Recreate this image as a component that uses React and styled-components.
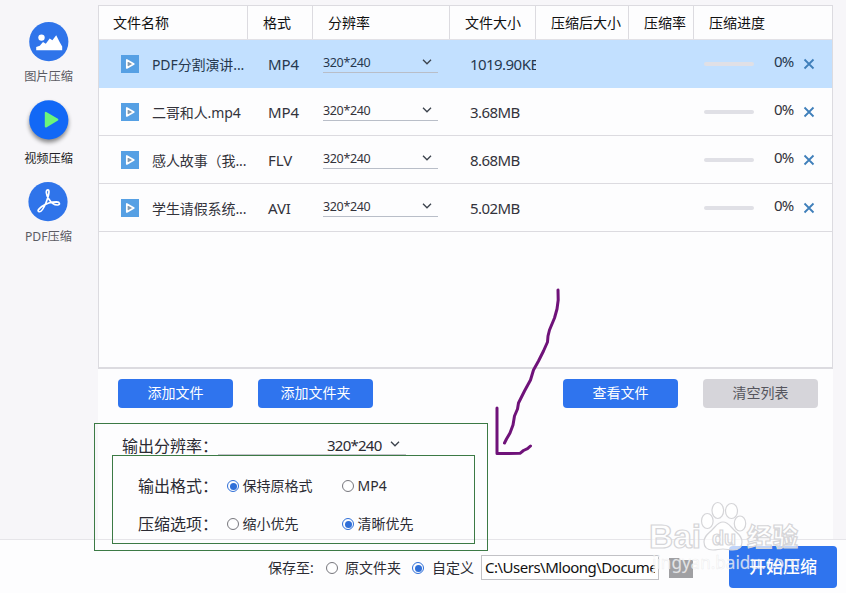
import { useState } from "react";
import styled, { createGlobalStyle } from "styled-components";

const GlobalStyle = createGlobalStyle`
  body {
    margin: 0;
    overflow: hidden;
    background: #fdfdfe;
  }
  * {
    box-sizing: border-box;
  }
`;

const Window = styled.div`
  position: relative;
  width: 846px;
  height: 593px;
  display: flex;
  flex-direction: column;
  background: #fdfdfe;
  color: #2b2b33;
  font-family: "Noto Sans", "Noto Sans CJK SC", sans-serif;
  font-size: 14px;
  line-height: 20px;
  white-space: nowrap;
`;

const Main = styled.div`
  display: flex;
  height: 539px;
  background: #f7f6f9;
`;

const Sidebar = styled.div`
  width: 98px;
  padding: 22px 1px 0 0;
`;

const SideItem = styled.div`
  display: flex;
  flex-direction: column;
  align-items: center;
  height: ${(props) => (props.$active ? "82px" : "78px")};
  color: ${(props) => (props.$active ? "#1e1e26" : "#5b5b63")};
  font-size: 12.2px;
`;

const SideIcon = styled.svg`
  width: 40px;
  height: 40px;
  flex: none;
  overflow: visible;
  filter: ${(props) =>
    props.$active ? "drop-shadow(0 3px 2px rgba(0, 0, 0, 0.45))" : "none"};
`;

const SideLabel = styled.div`
  margin-top: ${(props) => (props.$active ? "9px" : "5px")};
`;

const Content = styled.div`
  width: 735px;
  background: #fdfdfe;
`;

const TableTop = styled.div`
  height: 5px;
  background: #f7f6f9;
`;

const Table = styled.div`
  height: 364px;
  border: 1px solid #dcdbe0;
  border-bottom-width: 2px;
`;

const Columns = styled.div`
  display: grid;
  grid-template-columns: 149px 65px 137px 86px 93px 65px 1fr;
`;

const Head = styled(Columns)`
  height: 34px;
  border-bottom: 1px solid #e2e1e6;
  color: #111;
`;

const HeadCell = styled.div`
  padding: 7px 0 0 ${(props) => props.$pad || 15}px;
  border-right: 1px solid #dcdbe0;
  &:last-child {
    border-right: 0;
  }
`;

const Row = styled(Columns)`
  height: 48px;
  border-bottom: 1px solid ${(props) => (props.$selected ? "#c2e0ff" : "#dcdbe0")};
  background: ${(props) => (props.$selected ? "#c2e0ff" : "transparent")};
  color: ${(props) => (props.$selected ? "#26384e" : "#33333b")};
`;

const Cell = styled.div`
  display: flex;
  align-items: center;
  padding: 2px 0 0 ${(props) => props.$pad || 0}px;
  overflow: ${(props) => (props.$clip ? "hidden" : "visible")};
`;

const NameCell = styled(Cell)`
  letter-spacing: -0.1px;
`;

const ValueCell = styled(Cell)`
  padding-top: 0;
  font-size: 15px;
  letter-spacing: ${(props) => props.$spacing || -0.55}px;
`;

const FileIcon = styled.svg`
  width: 18px;
  height: 18px;
  margin: -1px 13px 0 0;
  flex: none;
`;

const SizeSelect = styled.div`
  width: 115px;
  height: 20px;
  margin: -3px 0 0 10px;
  padding: 0 6px 0 0;
  display: flex;
  align-items: center;
  justify-content: space-between;
  border-bottom: 1px solid #b9bec8;
  font-size: 12.5px;
  letter-spacing: -0.35px;
  svg {
    margin-top: -2px;
  }
`;

const ProgressCell = styled.div`
  display: flex;
  align-items: center;
  padding-left: 10px;
`;

const Track = styled.div`
  width: 50px;
  height: 4px;
  border-radius: 2px;
  background: #e0e0e6;
`;

const Percent = styled.div`
  width: 21px;
  margin: -6px 8px 0 20px;
  font-size: 15px;
  letter-spacing: -0.9px;
`;

const Actions = styled.div`
  display: flex;
  gap: 25px;
  padding: 10px 0 0 20px;
`;

const Button = styled.button`
  width: 115px;
  height: 29px;
  margin: 0 0 0 ${(props) => props.$push || 0}px;
  padding: 0 0 1px;
  border: 0;
  border-radius: 4px;
  background: ${(props) => (props.$muted ? "#d6d5da" : "#2f74ee")};
  color: ${(props) => (props.$muted ? "#55555d" : "#fff")};
  font: inherit;
`;

const Resolution = styled.div`
  display: flex;
  height: 27px;
  margin: 20px 0 0 24px;
  font-size: 16px;
`;

const ResolutionLabel = styled.div`
  width: 96px;
  padding-top: 8px;
`;

const ResolutionSelect = styled.div`
  display: flex;
  align-items: center;
  gap: 8px;
  width: 188px;
  padding: 8px 0 0 109px;
  border-bottom: 1px solid #c3c3ca;
  font-size: 15px;
  letter-spacing: -0.75px;
  svg {
    margin-top: -3px;
  }
`;

const Options = styled.div`
  padding: 12px 0 0 40px;
`;

const OptionRow = styled.div`
  display: grid;
  grid-template-columns: 88.5px 115px 115px;
  align-items: center;
  height: 38px;
`;

const OptionLabel = styled.div`
  font-size: 16px;
`;

const RadioLabel = styled.div`
  display: flex;
  align-items: center;
  gap: ${(props) => props.$gap || 4}px;
`;

const Radio = styled.div`
  width: 12px;
  height: 12px;
  flex: none;
  border: 1px solid ${(props) => (props.$checked ? "#2f6fd8" : "#77777d")};
  border-radius: 50%;
  padding: 1.5px;
  background: ${(props) => (props.$checked ? "#2f6fd8" : "#fff")} content-box;
`;

const Footer = styled.div`
  display: flex;
  align-items: center;
  height: 54px;
  padding: 2px 0 0 268px;
  border-top: 1px solid #e6e5e9;
`;

const SaveLabel = styled.div`
  width: 58px;
`;

const SaveTargets = styled.div`
  display: flex;
  gap: 11px;
`;

const PathBox = styled.div`
  width: 178px;
  height: 25px;
  margin-left: 7px;
  padding: 1px 3px;
  border: 1px solid #c2c2c6;
  background: #fff;
  color: #111;
`;

const PathText = styled.div`
  overflow: hidden;
  font-size: 15px;
  letter-spacing: -0.5px;
`;

const Folder = styled.svg`
  width: 24px;
  height: 20px;
  margin: 0 36px 0 10px;
`;

const StartButton = styled(Button)`
  width: 108px;
  height: 42px;
  margin-top: -2px;
  padding-bottom: 0;
  font-size: 17px;
  font-weight: 500;
`;

const Outline = styled.div`
  position: absolute;
  left: ${(props) => props.$x}px;
  top: ${(props) => props.$y}px;
  width: ${(props) => props.$w}px;
  height: ${(props) => props.$h}px;
  border: 1px solid #3c7a45;
  pointer-events: none;
`;

const Overlay = styled.svg`
  position: absolute;
  left: 0;
  top: 0;
  width: 846px;
  height: 593px;
  pointer-events: none;
`;

const files = [
  { name: "PDF分割演讲...", format: "MP4", size: "1019.90KB" },
  { name: "二哥和人.mp4", format: "MP4", size: "3.68MB" },
  { name: "感人故事（我...", format: "FLV", size: "8.68MB" },
  { name: "学生请假系统...", format: "AVI", size: "5.02MB" },
];

const Chevron = () => (
  <svg width="10" height="6" viewBox="0 0 10 6">
    <path d="M1 .8 5 4.8 9 .8" fill="none" stroke="#3b424c" strokeWidth="1.3" />
  </svg>
);

const ImageIcon = () => (
  <SideIcon viewBox="0 0 40 40">
    <circle cx="19.8" cy="19.7" r="19.6" fill="#2f74ea" />
    <circle cx="12.5" cy="15.6" r="3.2" fill="#fff" />
    <path
      d="M7.200 28.300v-3.400l3.600-1.200 3.200-3.600 2.800 1.600 3.900-5.200 2.700 1.800 3.800-5 3.400 6.700 2.600 4.400v3.900z"
      fill="#fff"
    />
  </SideIcon>
);

const VideoIcon = () => (
  <SideIcon viewBox="0 0 40 40" $active>
    <circle cx="19.8" cy="19.9" r="19.6" fill="#1268f6" />
    <path
      d="M16.800 12.800v13.800l11.600-6.900z"
      fill="#6cf57a"
      stroke="#6cf57a"
      strokeWidth="2"
      strokeLinejoin="round"
    />
  </SideIcon>
);

const PdfIcon = () => (
  <SideIcon viewBox="0 0 40 40">
    <circle cx="19" cy="19.7" r="19.6" fill="#2f74ea" />
    <path
      d="M19 7.800c-2.600 0-2 5 .6 8.900 2.400 3.800 6 6.500 9 6.300 2.800-.3 2.400-3-1-3.100-5 0-10.500 1.600-14.800 4.600-3.500 2.600-4.500 4.400-3 5.100 2 .8 5-3.500 7.300-9.100 2-5 4.200-12.700 1.900-12.700z"
      fill="none"
      stroke="#fff"
      strokeWidth="1.7"
      strokeLinejoin="round"
    />
  </SideIcon>
);

const App = () => {
  const [format, setFormat] = useState("keep");
  const [option, setOption] = useState("clear");
  const [target, setTarget] = useState("custom");

  return (
    <Window>
      <GlobalStyle />
      <Main>
        <Sidebar>
          <SideItem>
            <ImageIcon />
            <SideLabel>图片压缩</SideLabel>
          </SideItem>
          <SideItem $active>
            <VideoIcon />
            <SideLabel $active>视频压缩</SideLabel>
          </SideItem>
          <SideItem>
            <PdfIcon />
            <SideLabel>PDF压缩</SideLabel>
          </SideItem>
        </Sidebar>
        <Content>
          <TableTop />
          <Table>
            <Head>
              <HeadCell $pad={14}>文件名称</HeadCell>
              <HeadCell>格式</HeadCell>
              <HeadCell>分辨率</HeadCell>
              <HeadCell>文件大小</HeadCell>
              <HeadCell>压缩后大小</HeadCell>
              <HeadCell>压缩率</HeadCell>
              <HeadCell>压缩进度</HeadCell>
            </Head>
            {files.map((file, index) => (
              <Row key={file.name} $selected={index === 0}>
                <NameCell $pad={22}>
                  <FileIcon viewBox="0 0 18 18">
                    <path d="M0 0h18v18H0z" fill="#56a0e4" />
                    <path
                      d="M5.800 5v8l7-4z"
                      fill="#8398ab"
                      stroke="#fff"
                      strokeWidth="1.7"
                      strokeLinejoin="round"
                    />
                  </FileIcon>
                  {file.name}
                </NameCell>
                <ValueCell $pad={20} $spacing={-0.1}>
                  {file.format}
                </ValueCell>
                <Cell>
                  <SizeSelect>
                    320*240
                    <Chevron />
                  </SizeSelect>
                </Cell>
                <ValueCell $pad={20} $clip>
                  {file.size}
                </ValueCell>
                <Cell />
                <Cell />
                <ProgressCell>
                  <Track />
                  <Percent>0%</Percent>
                  <svg width="12" height="12" viewBox="0 0 12 12">
                    <path
                      d="M1.500 1.500l9 9M10.500 1.500l-9 9"
                      stroke="#3f7fba"
                      strokeWidth="1.800"
                    />
                  </svg>
                </ProgressCell>
              </Row>
            ))}
          </Table>
          <Actions>
            <Button>添加文件</Button>
            <Button>添加文件夹</Button>
            <Button $push={165}>查看文件</Button>
            <Button $muted>清空列表</Button>
          </Actions>
          <Resolution>
            <ResolutionLabel>输出分辨率：</ResolutionLabel>
            <ResolutionSelect>
              320*240
              <Chevron />
            </ResolutionSelect>
          </Resolution>
          <Options>
            <OptionRow>
              <OptionLabel>输出格式：</OptionLabel>
              <RadioLabel onClick={() => setFormat("keep")}>
                <Radio $checked={format === "keep"} />
                保持原格式
              </RadioLabel>
              <RadioLabel onClick={() => setFormat("mp4")}>
                <Radio $checked={format === "mp4"} />
                MP4
              </RadioLabel>
            </OptionRow>
            <OptionRow>
              <OptionLabel>压缩选项：</OptionLabel>
              <RadioLabel onClick={() => setOption("small")}>
                <Radio $checked={option === "small"} />
                缩小优先
              </RadioLabel>
              <RadioLabel onClick={() => setOption("clear")}>
                <Radio $checked={option === "clear"} />
                清晰优先
              </RadioLabel>
            </OptionRow>
          </Options>
        </Content>
      </Main>
      <Footer>
        <SaveLabel>保存至:</SaveLabel>
        <SaveTargets>
          <RadioLabel $gap={7} onClick={() => setTarget("source")}>
            <Radio $checked={target === "source"} />
            原文件夹
          </RadioLabel>
          <RadioLabel $gap={8} onClick={() => setTarget("custom")}>
            <Radio $checked={target === "custom"} />
            自定义
          </RadioLabel>
        </SaveTargets>
        <PathBox>
          <PathText>C:\Users\Mloong\Documents</PathText>
        </PathBox>
        <Folder viewBox="0 0 24 20">
          <path d="M0 0h10l1.500 2H24v18H0z" fill="#a0a0a3" />
        </Folder>
        <StartButton>开始压缩</StartButton>
      </Footer>

      <Outline $x={94} $y={423} $w={394} $h={128} />
      <Outline $x={112} $y={455} $w={363} $h={89} />
      <Overlay viewBox="0 0 846 593">
        <g
          fill="none"
          stroke="#6f1279"
          strokeWidth="3"
          strokeLinecap="round"
          strokeLinejoin="round"
        >
          <path d="M558 290l.2 10-1.200 9-2.500 9-5 12-1.500 6-.5 6-4 9-5 10-5 9-3 10-6 11-6 12-1 6-3 7-1.500 9-3 8-3.500 6-2 4" />
          <path d="M497 408v45.500l23-.2 3.500-2.800 4-1.800 3-2.700" />
        </g>
        <g fill="#fff" fillOpacity="0.7" stroke="#d5d5d8" strokeWidth="1.200">
          <text
            x="649"
            y="548"
            fontSize="33"
            fontWeight="700"
            fontFamily="Liberation Sans"
            textLength="52"
            lengthAdjust="spacingAndGlyphs"
          >
            Bai
          </text>
          <ellipse cx="707.300" cy="521" rx="5.800" ry="7.500" />
          <ellipse cx="717.800" cy="510.500" rx="5.800" ry="8" />
          <ellipse cx="731.500" cy="511" rx="6" ry="7.500" />
          <ellipse cx="740" cy="523.500" rx="5.700" ry="7.500" />
          <path d="M723 522c5 0 7 4 11 8s8 6 8 12c0 6-4 8-9 8-4 0-6-1-10-1s-6 1-10 1c-6 0-9-3-9-8 0-6 4-8 8-12s6-8 11-8z" />
          <text
            x="712"
            y="545"
            fontSize="20"
            fontWeight="700"
            fontFamily="Liberation Sans"
            textLength="24"
            lengthAdjust="spacingAndGlyphs"
          >
            du
          </text>
          <text
            x="747"
            y="546"
            fontSize="25"
            fontWeight="900"
            fontFamily="Noto Sans CJK SC"
            textLength="51"
          >
            经验
          </text>
        </g>
        <text
          x="652"
          y="569"
          fontSize="18"
          fontFamily="Noto Sans"
          fill="#fff"
          fillOpacity="0.75"
          stroke="#cfcfd3"
          strokeOpacity="0.35"
          strokeWidth="0.6"
          textLength="148"
          lengthAdjust="spacingAndGlyphs"
        >
          jingyan.baidu.com
        </text>
      </Overlay>
    </Window>
  );
};

export default App;
